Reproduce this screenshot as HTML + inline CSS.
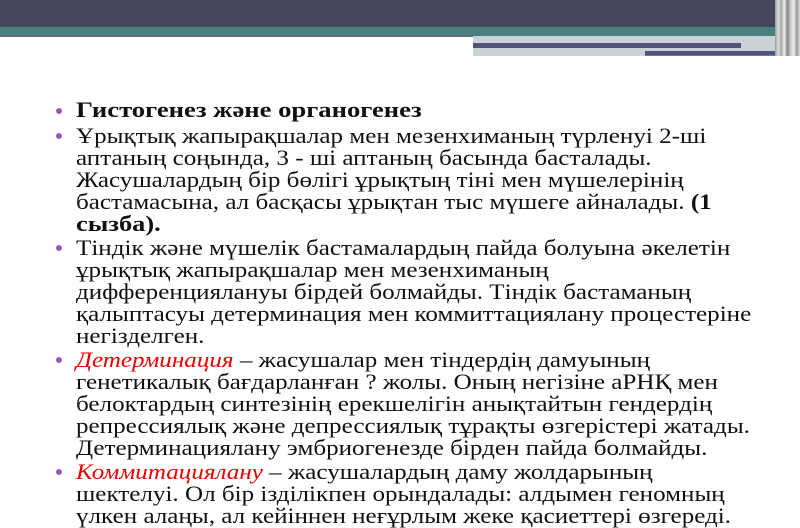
<!DOCTYPE html>
<html><head><meta charset="utf-8"><style>
body{margin:0;width:800px;height:528px;overflow:hidden;background:#fff;position:relative;font-family:"Liberation Serif",serif;}
.top{position:absolute;left:0;top:0;width:800px;height:27px;background:#44465a;}
.teal{position:absolute;left:0;top:27px;width:800px;height:9px;background:#47807e;}
.ln{position:absolute;left:0;top:35px;width:473px;height:2px;background:#5f6e70;}
.gr{position:absolute;left:473px;top:36px;width:327px;height:20px;background:#c9d3d3;}
.b1{position:absolute;left:473px;top:43px;width:268px;height:4px;background:#4f5382;border-bottom:1px solid #555;}
.b2{position:absolute;left:645px;top:51px;width:140px;height:4px;background:#4f5382;border-bottom:1px solid #777;}
.vr{position:absolute;left:775px;top:0;width:25px;height:56px;background:linear-gradient(90deg,#999,#ddd,#aaa,#eee,#888,#ccc,#eee,#999,#ddd);}
.l{position:absolute;left:76px;font-size:22px;color:#111;white-space:nowrap;line-height:22px;transform:scaleX(1.14);transform-origin:0 0;}
.d{position:absolute;left:56px;width:6px;height:6px;border-radius:50%;background:#9b59b6;}
.r{color:#e00;font-style:italic;}
</style></head><body>
<div class="top"></div><div class="teal"></div><div class="ln"></div>
<div class="gr"></div><div class="b1"></div><div class="b2"></div><div class="vr"></div>

<div class="d" style="top:108px"></div>
<div class="l" style="top:99px;transform:scaleX(1.21)"><b>Гистогенез жəне органогенез</b></div>
<div class="d" style="top:133px"></div>
<div class="l" style="top:125px">Ұрықтық жапырақшалар мен мезенхиманың түрленуі 2-ші</div>
<div class="l" style="top:147px">аптаның соңында, 3 - ші аптаның басында басталады.</div>
<div class="l" style="top:169px">Жасушалардың бір бөлігі ұрықтың тіні мен мүшелерінің</div>
<div class="l" style="top:191px">бастамасына, ал басқасы ұрықтан тыс мүшеге айналады. <b>(1</b></div>
<div class="l" style="top:213px;transform:scaleX(1.2)"><b>сызба).</b></div>
<div class="d" style="top:245px"></div>
<div class="l" style="top:237px">Тіндік жəне мүшелік бастамалардың пайда болуына əкелетін</div>
<div class="l" style="top:259px">ұрықтық жапырақшалар мен мезенхиманың</div>
<div class="l" style="top:281px">дифференциялануы бірдей болмайды. Тіндік бастаманың</div>
<div class="l" style="top:303px">қалыптасуы детерминация мен коммиттациялану процестеріне</div>
<div class="l" style="top:325px">негізделген.</div>
<div class="d" style="top:357px"></div>
<div class="l" style="top:349px"><span class="r">Детерминация</span> – жасушалар мен тіндердің дамуының</div>
<div class="l" style="top:371px">генетикалық бағдарланған ? жолы. Оның негізіне аРНҚ мен</div>
<div class="l" style="top:393px">белоктардың синтезінің ерекшелігін анықтайтын гендердің</div>
<div class="l" style="top:415px">репрессиялық жəне депрессиялық тұрақты өзгерістері жатады.</div>
<div class="l" style="top:437px">Детерминациялану эмбриогенезде бірден пайда болмайды.</div>
<div class="d" style="top:469px"></div>
<div class="l" style="top:461px"><span class="r">Коммитациялану</span> – жасушалардың даму жолдарының</div>
<div class="l" style="top:483px">шектелуі. Ол бір ізділікпен орындалады: алдымен геномның</div>
<div class="l" style="top:505px">үлкен алаңы, ал кейіннен неғұрлым жеке қасиеттері өзгереді.</div>
</body></html>
